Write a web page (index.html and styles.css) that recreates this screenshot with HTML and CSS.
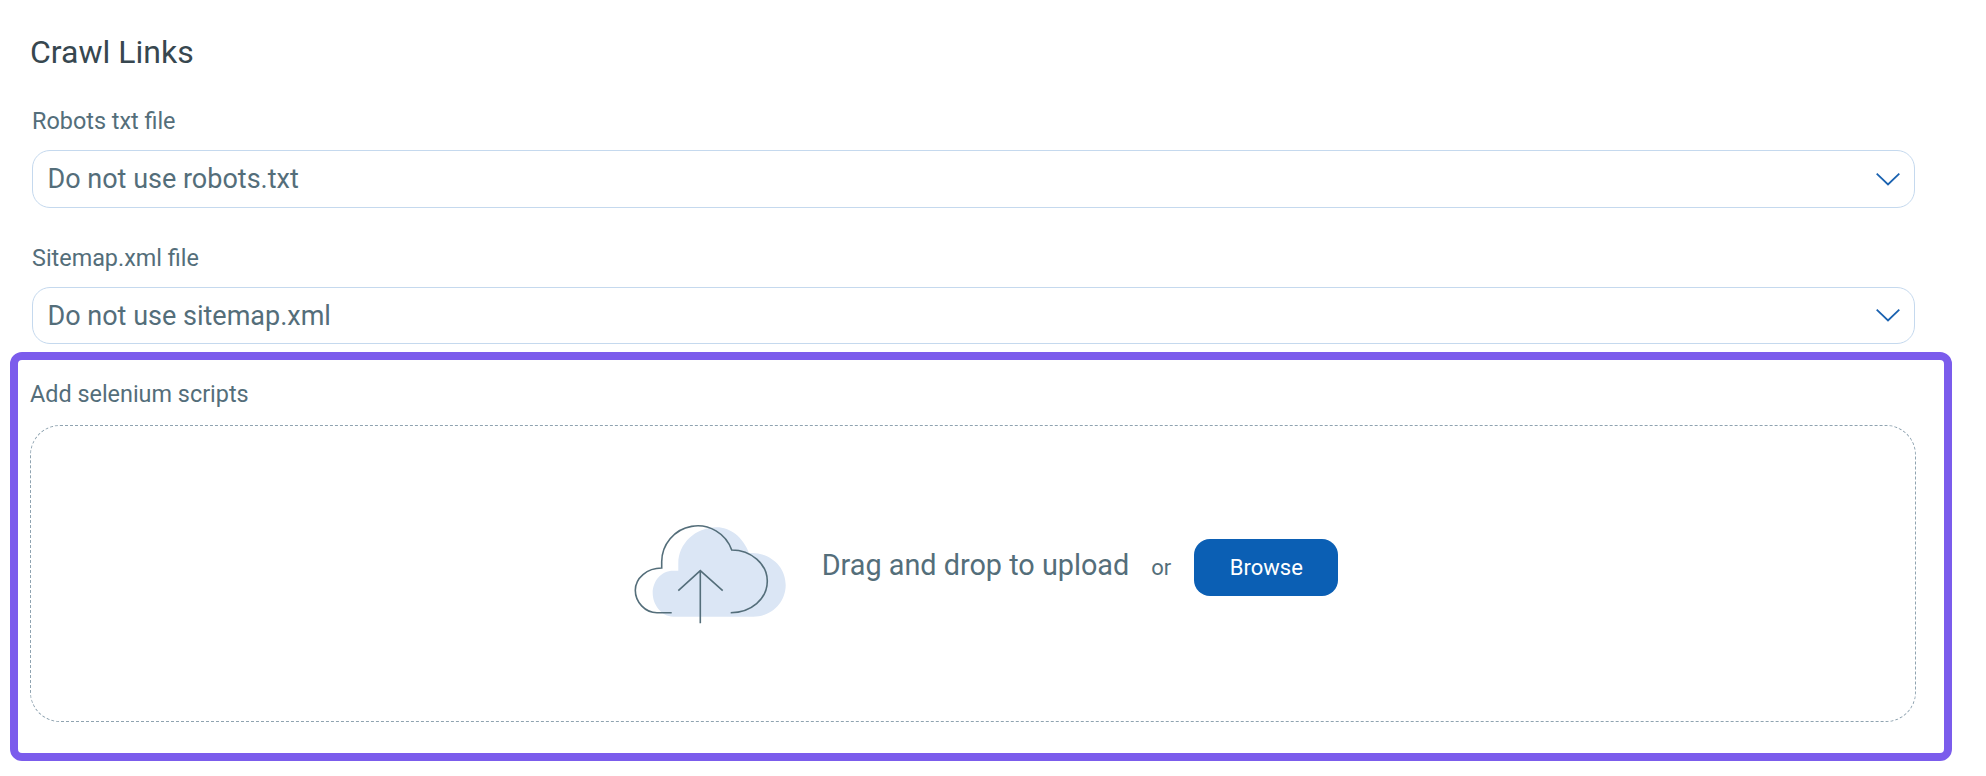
FILE: index.html
```html
<!DOCTYPE html>
<html lang="en">

<head>
    <meta charset="UTF-8">
    <title>Crawl Links</title>
    <link rel="stylesheet" href="styles.css">
</head>

<body>
    <main class="page">
        <h1 class="title">Crawl Links</h1>

        <div class="field">
            <label class="label">Robots txt file</label>
            <div class="select">
                <span>Do not use robots.txt</span>
                <svg class="chevron" viewBox="0 0 24 13"><path d="M0.7 0.7 12 11.5 23.3 0.7"/></svg>
            </div>
        </div>

        <div class="field field-last">
            <label class="label">Sitemap.xml file</label>
            <div class="select select-short">
                <span>Do not use sitemap.xml</span>
                <svg class="chevron" viewBox="0 0 24 13"><path d="M0.7 0.7 12 11.5 23.3 0.7"/></svg>
            </div>
        </div>

        <section class="highlight">
            <label class="label label-upload">Add selenium scripts</label>
            <div class="dropzone">
                <svg class="cloud" viewBox="0 0 160 110">
                    <path class="cloud-fill" d="M43.3 96.7H123.3C142 96.7 155.7 82 155.7 65 155.7 47 141 33 121.7 33H119C113 17 100 7.3 86.7 7.3 65 7.3 48.3 24 48.3 43.3V50.7H43.3C31 50.7 22.7 61 22.7 73.3 22.7 84 31 96.7 43.3 96.7Z"/>
                    <path class="cloud-line" d="M41.7 92.7H27C15 92.7 5.3 82 5.3 70.3 5.3 58 17 48 31.7 48V42A36 36 0 0 1 101.7 30C121 30 137.3 44 137.3 61 137.3 79 121 92.7 100.7 92.7"/>
                    <path class="cloud-line" d="M70.3 103.3V50.7M48.3 70.7 70.3 50.7 92.7 70.7"/>
                </svg>
                <span class="drop-text">Drag and drop to upload</span>
                <span class="drop-or">or</span>
                <button class="browse-btn">Browse</button>
            </div>
        </section>
    </main>
</body>

</html>
```

FILE: styles.css
```css
body {
    font-family: Roboto, "Liberation Sans", sans-serif;
    margin: 0;
    background-color: #fff;
    color: #546e7a;
}

.page {
    padding: 34px 34px 16px 10px;
}

.title {
    font-size: 32px;
    font-weight: 400;
    line-height: 36px;
    color: #37474f;
    margin: 0 0 37px 20px;
}

.field {
    margin-left: 22px;
    margin-right: 37px;
    margin-bottom: 36px;
}

.field-last {
    margin-bottom: 8px;
}

.label {
    display: block;
    font-size: 23.4px;
    line-height: 28px;
    margin-bottom: 15px;
}

.select {
    display: flex;
    justify-content: space-between;
    align-items: center;
    height: 58px;
    box-sizing: border-box;
    padding: 0 14px 0 14.5px;
    border: 1px solid #c5d9ee;
    border-radius: 18px;
    font-size: 27px;
}

.select-short {
    height: 57px;
}

.chevron {
    width: 24px;
    height: 13px;
}

.chevron path {
    fill: none;
    stroke: #1a62b0;
    stroke-width: 1.8;
}

.highlight {
    border: 8px solid #7b5cec;
    border-radius: 12px;
    height: 409px;
    box-sizing: border-box;
    padding: 20px 28px 0 12px;
}

.label-upload {
    margin-bottom: 17px;
}

.dropzone {
    display: flex;
    justify-content: center;
    align-items: center;
    height: 297px;
    box-sizing: border-box;
    padding: 0 0 12px 22px;
    border: 1px dashed #8fa3b0;
    border-radius: 30px;
}

.cloud {
    width: 160px;
    height: 110px;
    margin-top: 15px;
    margin-right: 32px;
}

.cloud-fill {
    fill: #dbe6f5;
}

.cloud-line {
    fill: none;
    stroke: #546e7a;
    stroke-width: 1.6;
}

.drop-text {
    font-size: 28.8px;
    margin-bottom: 6px;
    margin-right: 22px;
}

.drop-or {
    font-size: 22px;
    margin-right: 23px;
}

.browse-btn {
    width: 144px;
    height: 57px;
    border: none;
    border-radius: 16px;
    background-color: #0b5fb4;
    color: #fff;
    font-family: inherit;
    font-size: 22px;
    cursor: pointer;
}
```
